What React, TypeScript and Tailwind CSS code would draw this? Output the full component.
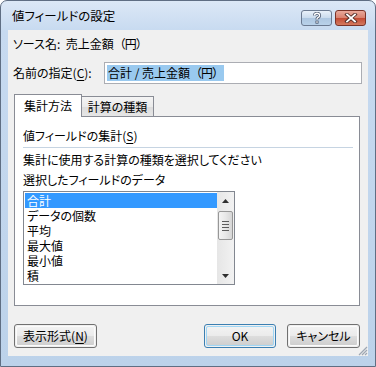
import React from "react";

const font = "font-['Noto_Sans_CJK_JP',sans-serif] [font-feature-settings:'palt']";

function Paren({ children }: { children: React.ReactNode }) {
  return <span className="[font-feature-settings:normal] tracking-[-1px]">{children}</span>;
}

function Btn({ children, w, focused }: { children: React.ReactNode; w: string; focused?: boolean }) {
  return (
    <div
      className={`${w} h-[24px] rounded-[3px] border ${focused ? "border-[#3c7fb1]" : "border-[#707070]"} p-px`}
    >
      <div
        className={`h-full w-full rounded-[2px] ${focused ? "border border-[#9fd6f5]" : "border border-[#fbfbfb]"} bg-[linear-gradient(#f2f2f2_0%,#ebebeb_48%,#dddddd_52%,#cfcfcf_100%)] flex items-center justify-center text-[12px] leading-none text-black`}
      >
        {children}
      </div>
    </div>
  );
}

export default function App() {
  const items = ["合計", "データの個数", "平均", "最大値", "最小値", "積"];
  return (
    <div className={`w-[376px] h-[367px] bg-white ${font}`}>
      <div className="relative w-[376px] h-[367px] rounded-t-[7px] border border-[#5f6e83] bg-[linear-gradient(#dce8f6_0px,#c7daf0_30px,#bcd2ea_100%)] flex flex-col">
        {/* title bar */}
        <div className="h-[29px] flex items-center pl-[11px] relative">
          <span className="text-[12.5px] leading-none text-black mt-[1px]">値フィールドの設定</span>
          <div className="absolute right-[9px] top-[9px] flex gap-[3px]">
            <div className="w-[31px] h-[16px] rounded-[3px] border border-[#6b7a91] bg-[linear-gradient(#e9f1fa_0%,#cbdcee_48%,#aec7e1_52%,#b9d2ea_100%)] flex items-center justify-center">
              <svg width="10" height="12" viewBox="0 0 10 12">
                <path d="M2.5 3.6 Q2.5 1.3 5 1.3 Q7.6 1.3 7.6 3.5 Q7.6 5 5.6 5.8 Q5 6.1 5 7.4" fill="none" stroke="#47536a" strokeWidth="3" />
                <path d="M2.5 3.6 Q2.5 1.3 5 1.3 Q7.6 1.3 7.6 3.5 Q7.6 5 5.6 5.8 Q5 6.1 5 7.4" fill="none" stroke="#ffffff" strokeWidth="1.4" />
                <rect x="3.5" y="8.6" width="3" height="3" fill="#47536a" />
                <rect x="4.3" y="9.3" width="1.4" height="1.5" fill="#ffffff" />
              </svg>
            </div>
            <div className="w-[31px] h-[16px] rounded-[3px] border border-[#7a3328] bg-[linear-gradient(#e9a99b_0%,#d98270_48%,#c34b34_52%,#d37a5f_100%)] flex items-center justify-center">
              <svg width="14" height="10" viewBox="0 0 14 10">
                <path d="M3 1.5 L11 8.5 M11 1.5 L3 8.5" stroke="#4e2b26" strokeWidth="3.6" strokeLinecap="square" />
                <path d="M3 1.5 L11 8.5 M11 1.5 L3 8.5" stroke="#ffffff" strokeWidth="1.8" strokeLinecap="square" />
              </svg>
            </div>
          </div>
        </div>
        {/* client */}
        <div className="mx-[7px] w-[360px] h-[326px] bg-[#f0f0f0] flex flex-col relative text-black">
          <div className="h-[28px] flex items-center pl-[5px] text-[12px] leading-none">
            ソース名:&nbsp;&nbsp;売上金額<Paren>（円）</Paren>
          </div>
          <div className="mt-[4px] h-[22px] flex items-center">
            <div className="w-[96px] pl-[5px] text-[12px] leading-none">
              名前の指定(<span className="underline underline-offset-2">C</span>):
            </div>
            <div className="w-[258px] h-[22px] border border-[#abadb3] bg-white flex items-center pl-[2px]">
              <span className="bg-[#99c9ef] h-[16px] px-[1px] flex items-center text-[12px] leading-none whitespace-pre">
                合計 / 売上金額<Paren>（円）</Paren>
              </span>
            </div>
          </div>
          {/* tabs */}
          <div className="mt-[10px] h-[23px] flex items-end px-[6px] relative z-10">
            <div className="w-[68px] h-[23px] border border-b-0 border-[#898c95] bg-white flex items-center justify-center text-[12px] leading-none pb-[1px]">
              集計方法
            </div>
            <div className="w-[72px] h-[21px] border border-l-0 border-[#898c95] bg-[linear-gradient(#f4f4f4_0%,#ebebeb_50%,#dcdcdc_51%,#e6e6e6_100%)] flex items-center justify-center text-[12px] leading-none">
              計算の種類
            </div>
          </div>
          <div className="mx-[6px] w-[346px] h-[190px] -mt-px border border-[#898c95] bg-white flex flex-col pl-[8px] pt-[11px]">
            <div className="h-[16px] flex items-center text-[12px] leading-none">
              値フィールドの集計(<span className="underline underline-offset-2">S</span>)
            </div>
            <div className="mt-[3px] h-px w-[330px] bg-[#c6d4e2]" />
            <div className="mt-[4px] h-[16px] flex items-center text-[12px] leading-none">
              集計に使用する計算の種類を選択してください
            </div>
            <div className="mt-[4px] h-[16px] flex items-center text-[12px] leading-none">
              選択したフィールドのデータ
            </div>
            <div className="mt-[3px] w-[212px] h-[94px] border border-[#828790] bg-white flex">
              <div className="flex-1 pt-px pl-px">
                {items.map((t, i) => (
                  <div
                    key={t}
                    className={`h-[15px] pl-[2px] text-[12px] leading-[15px] overflow-hidden ${i === 0 ? "bg-[#3399ff] text-white" : "text-black"}`}
                  >
                    {t}
                  </div>
                ))}
              </div>
              <div className="w-[17px] h-full bg-[linear-gradient(90deg,#e6e6e6,#f2f2f2)] flex flex-col items-center">
                <div className="h-[17px] w-full flex items-center justify-center">
                  <svg width="7" height="4" viewBox="0 0 7 4"><path d="M3.5 0 L7 4 L0 4 Z" fill="#2f2f2f" /></svg>
                </div>
                <div className="mt-[2px] w-[15px] h-[29px] rounded-[2px] border border-[#979797] bg-[linear-gradient(90deg,#f4f4f4,#e8e8e8_50%,#d6d6d6)] flex flex-col items-center justify-center gap-[2px]">
                  <div className="w-[7px] h-px bg-[#5d5d5d]" />
                  <div className="w-[7px] h-px bg-[#5d5d5d]" />
                  <div className="w-[7px] h-px bg-[#5d5d5d]" />
                  <div className="w-[7px] h-px bg-[#5d5d5d]" />
                </div>
                <div className="flex-1" />
                <div className="h-[17px] w-full flex items-center justify-center">
                  <svg width="7" height="4" viewBox="0 0 7 4"><path d="M0 0 L7 0 L3.5 4 Z" fill="#2f2f2f" /></svg>
                </div>
              </div>
            </div>
          </div>
          {/* buttons */}
          <div className="mt-[18px] h-[24px] flex items-center pl-[6px] pr-[8px]">
            <Btn w="w-[83px]">
              表示形式(<span className="underline underline-offset-2">N</span>)
            </Btn>
            <div className="flex-1" />
            <Btn w="w-[72px]" focused>
              OK
            </Btn>
            <div className="w-[11px]" />
            <Btn w="w-[73px]">キャンセル</Btn>
          </div>
          <svg className="absolute right-0 bottom-0" width="11" height="11" viewBox="0 0 11 11">
            <path d="M10 2 L2 10 M10 5 L5 10 M10 8 L8 10" stroke="#9ea7b3" strokeWidth="1.2" />
          </svg>
        </div>
      </div>
    </div>
  );
}
